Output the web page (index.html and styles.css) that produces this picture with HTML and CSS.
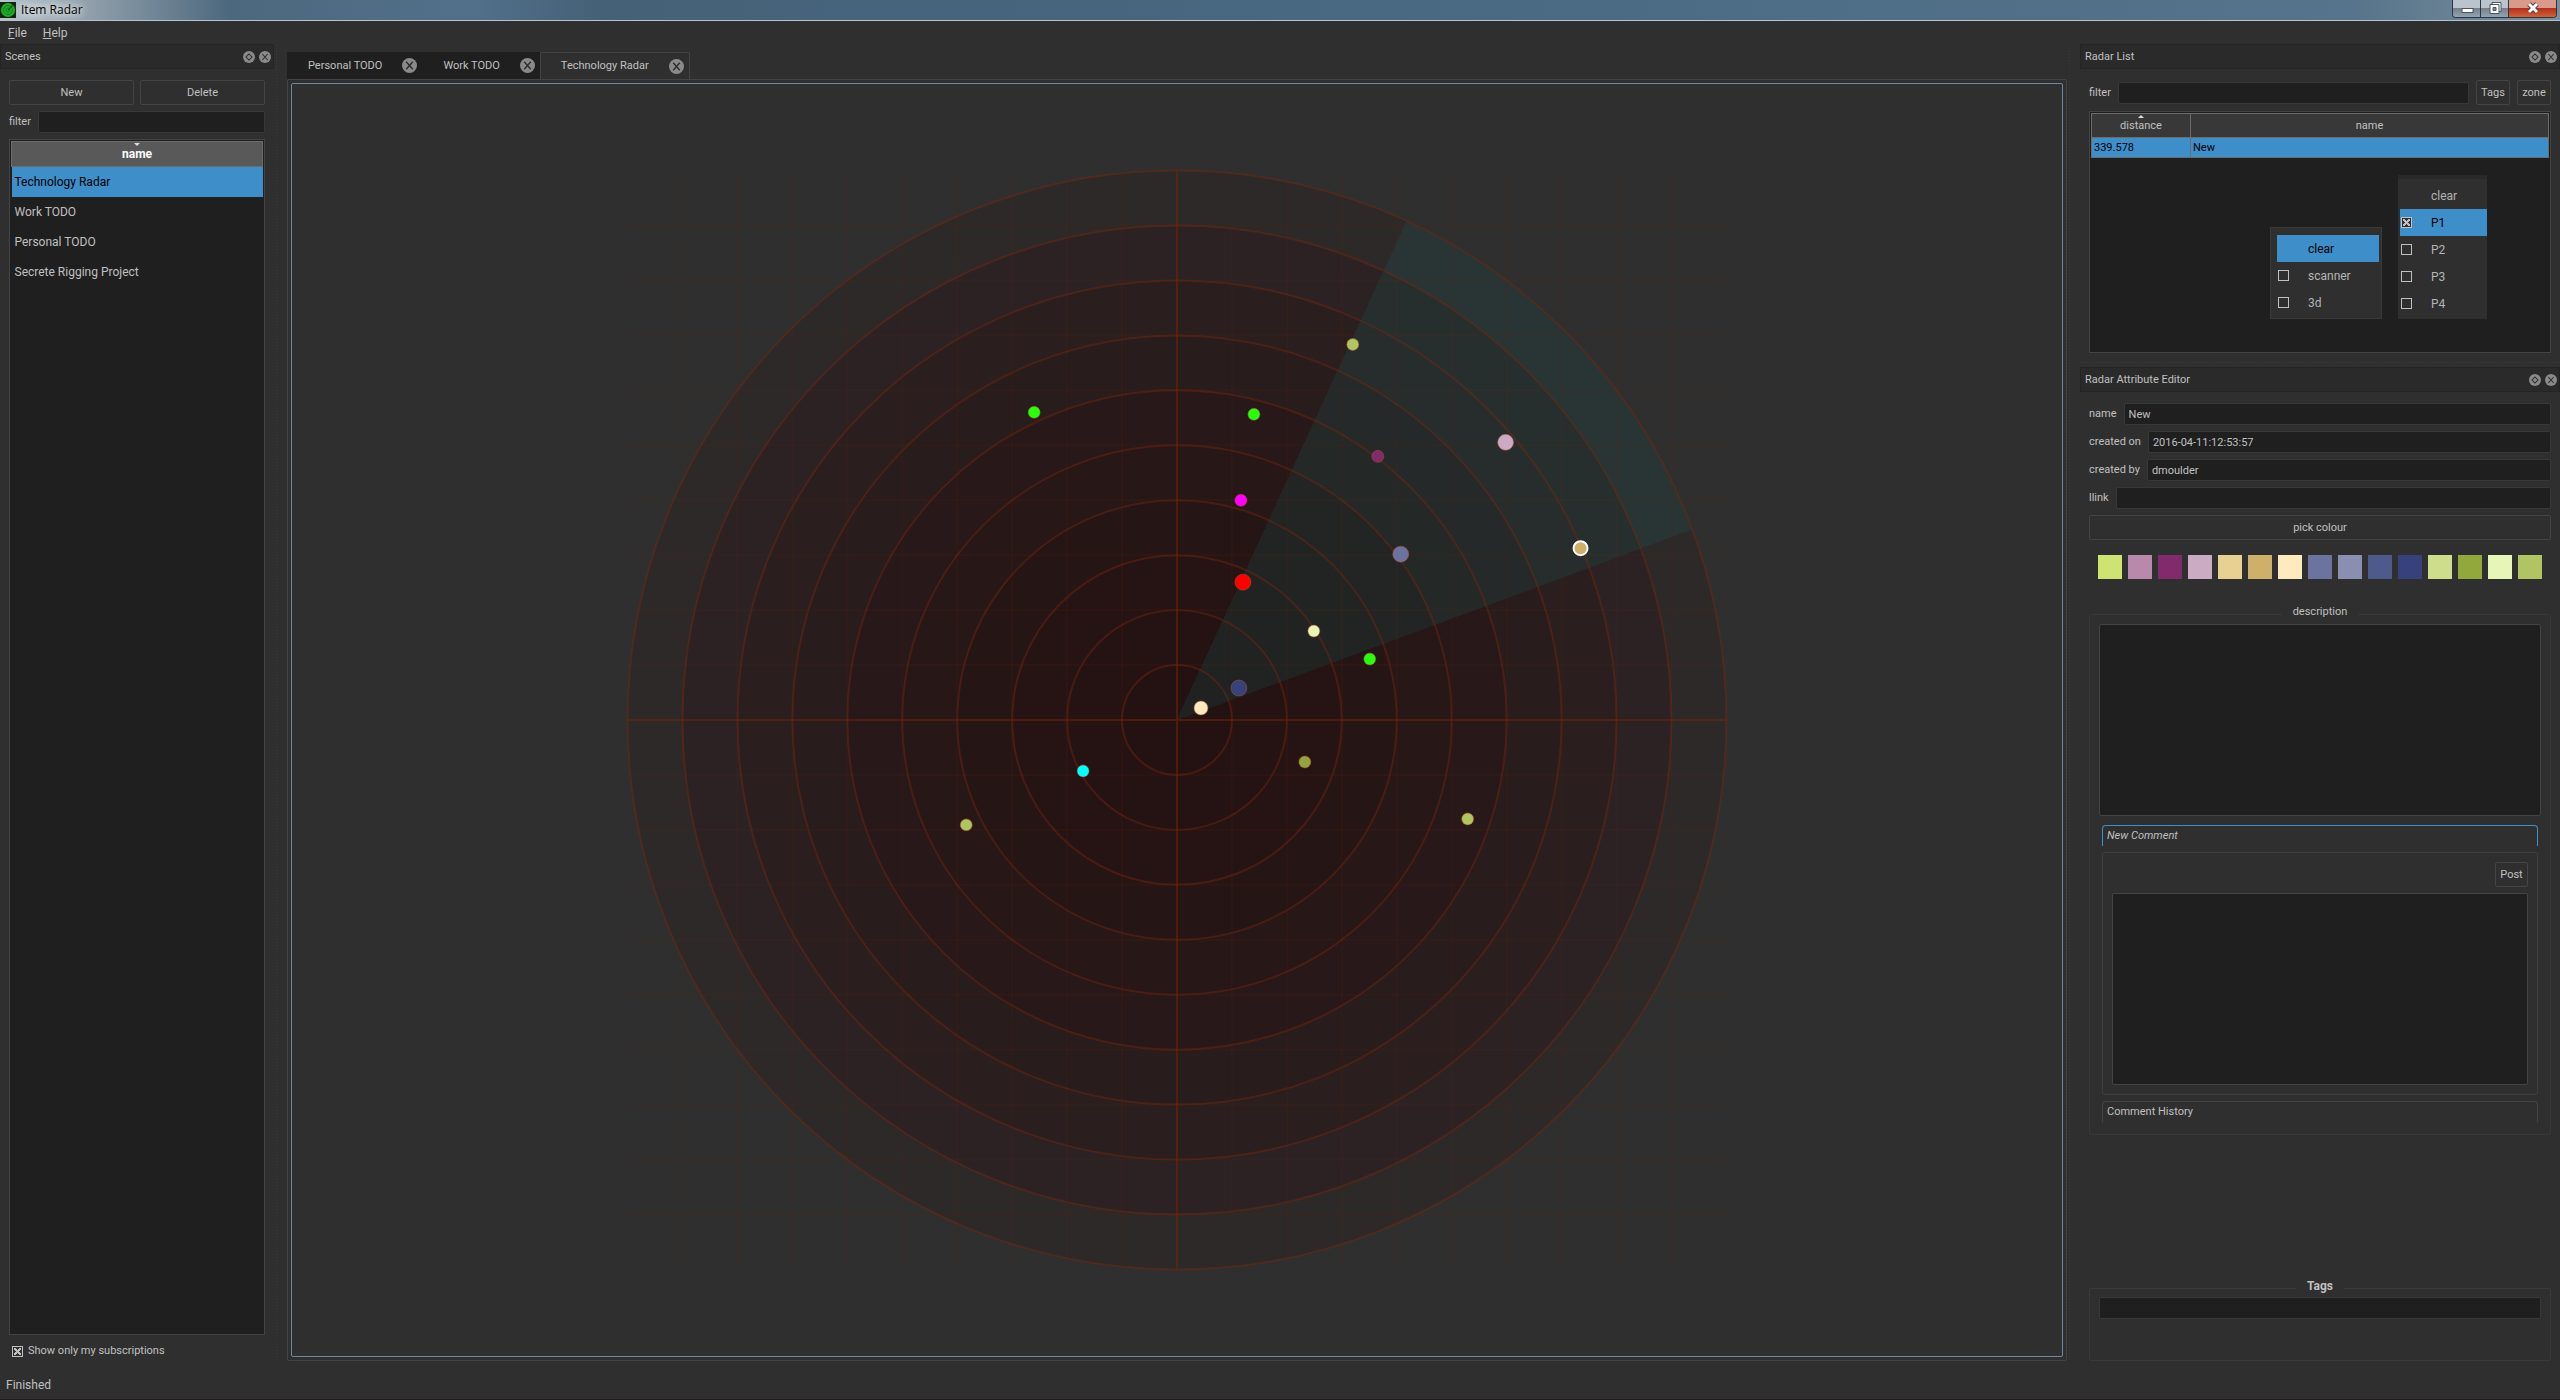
FILE: index.html
```html
<!DOCTYPE html>
<html lang="en">
<head>
<meta charset="utf-8">
<title>Item Radar</title>
<link rel="stylesheet" href="styles.css">
</head>
<body>
<header class="titlebar">
  <svg class="app-icon" viewBox="0 0 16 16" aria-hidden="true">
    <rect width="16" height="16" fill="#12240f"/>
    <circle cx="8" cy="8" r="7" fill="#1fae2c"/>
    <circle cx="8" cy="8" r="4.5" fill="none" stroke="#14801e"/>
    <circle cx="8" cy="8" r="2" fill="none" stroke="#14801e"/>
    <path d="M8 8L13 3" stroke="#0d5a15" stroke-width="1.2"/>
  </svg>
  <h1 class="app-title">Item Radar</h1>
  <div class="window-controls">
    <button class="win-btn" aria-label="Minimize"><svg viewBox="0 0 28 17"><rect x="9" y="8.500" width="11" height="4" fill="#fff" stroke="#4b5560"/></svg></button>
    <button class="win-btn" aria-label="Restore"><svg viewBox="0 0 28 17"><path d="M11 2.500h9v9h-9z" fill="#fff" stroke="#4b5560"/><path d="M9 4.500h9v9H9z" fill="#fff" stroke="#4b5560"/><path d="M12 7.500h3v3h-3z" fill="#7c8a97" stroke="#4b5560"/></svg></button>
    <button class="win-btn win-close" aria-label="Close"><svg viewBox="0 0 28 17"><path d="M10 4L18 12M18 4L10 12" stroke="#5c3a3a" stroke-width="5"/><path d="M10 4L18 12M18 4L10 12" stroke="#fff" stroke-width="3"/></svg></button>
  </div>
</header>

<svg class="defs" aria-hidden="true">
  <symbol id="i-close" viewBox="0 0 16 16"><circle cx="8" cy="8" r="8" fill="#8a8a8a"/><path d="M4.500 4L11.500 12M11.500 4L4.500 12" stroke="#2a2a2a" stroke-width="1.400"/></symbol>
  <symbol id="i-float" viewBox="0 0 16 16"><circle cx="8" cy="8" r="8" fill="#8a8a8a"/><path d="M8 4L12 8L8 12L4 8Z" fill="none" stroke="#2a2a2a" stroke-width="1.400"/></symbol>
</svg>

<nav class="menubar">
  <button class="menu-btn"><u>F</u>ile</button>
  <button class="menu-btn"><u>H</u>elp</button>
</nav>

<div class="workspace">
  <aside class="dock scenes">
    <header class="dock-title"><h2>Scenes</h2>
      <button class="icon-btn" aria-label="Float"><svg><use href="#i-float"/></svg></button>
      <button class="icon-btn" aria-label="Close"><svg><use href="#i-close"/></svg></button>
    </header>
    <div class="scenes-body">
      <div class="button-row">
        <button class="btn">New</button>
        <button class="btn">Delete</button>
      </div>
      <div class="field"><label for="scene-filter">filter</label><input id="scene-filter" type="text"></div>
      <div class="scene-list">
        <table class="scene-table">
          <thead><tr><th>name</th></tr></thead>
          <tbody>
            <tr class="selected"><td>Technology Radar</td></tr>
            <tr><td>Work TODO</td></tr>
            <tr><td>Personal TODO</td></tr>
            <tr><td>Secrete Rigging Project</td></tr>
          </tbody>
        </table>
      </div>
      <label class="check"><input type="checkbox" checked>Show only my subscriptions</label>
    </div>
  </aside>

  <div class="splitter"></div>

  <main class="center">
    <div class="tabs">
      <div class="tab"><button class="tab-label">Personal TODO</button><button class="icon-btn tab-x" aria-label="Close tab"><svg><use href="#i-close"/></svg></button></div>
      <div class="tab"><button class="tab-label">Work TODO</button><button class="icon-btn tab-x" aria-label="Close tab"><svg><use href="#i-close"/></svg></button></div>
      <div class="tab active"><button class="tab-label">Technology Radar</button><button class="icon-btn tab-x" aria-label="Close tab"><svg><use href="#i-close"/></svg></button></div>
    </div>
    <div class="pane">
      <svg class="radar" viewBox="-886 -636 1772 1272" role="img" aria-label="Radar"></svg>
    </div>
  </main>

  <div class="splitter"></div>

  <div class="right-column">
    <section class="dock radar-list">
      <header class="dock-title"><h2>Radar List</h2>
        <button class="icon-btn" aria-label="Float"><svg><use href="#i-float"/></svg></button>
        <button class="icon-btn" aria-label="Close"><svg><use href="#i-close"/></svg></button>
      </header>
      <div class="list-tools field"><label for="item-filter">filter</label><input id="item-filter" type="text"><button class="btn">Tags</button><button class="btn">zone</button></div>
      <div class="item-list">
        <table class="item-table">
          <thead><tr><th class="col-distance">distance</th><th>name</th></tr></thead>
          <tbody><tr><td>339.578</td><td>New</td></tr></tbody>
        </table>
        <div class="popup popup-tags">
          <button class="option current">clear</button>
          <label class="option"><input type="checkbox">scanner</label>
          <label class="option"><input type="checkbox">3d</label>
        </div>
        <div class="popup popup-zones">
          <button class="option">clear</button>
          <label class="option current"><input type="checkbox" checked>P1</label>
          <label class="option"><input type="checkbox">P2</label>
          <label class="option"><input type="checkbox">P3</label>
          <label class="option"><input type="checkbox">P4</label>
        </div>
      </div>
    </section>

    <div class="splitter-h"></div>

    <section class="dock editor">
      <header class="dock-title"><h2>Radar Attribute Editor</h2>
        <button class="icon-btn" aria-label="Float"><svg><use href="#i-float"/></svg></button>
        <button class="icon-btn" aria-label="Close"><svg><use href="#i-close"/></svg></button>
      </header>
      <div class="editor-body">
        <div class="field"><label for="f-name">name</label><input id="f-name" type="text" value="New"></div>
        <div class="field"><label for="f-on">created on</label><input id="f-on" type="text" value="2016-04-11:12:53:57"></div>
        <div class="field"><label for="f-by">created by</label><input id="f-by" type="text" value="dmoulder"></div>
        <div class="field"><label for="f-link">llink</label><input id="f-link" type="text"></div>
        <button class="btn">pick colour</button>
        <div class="swatches"></div>
        <fieldset class="group description">
          <legend>description</legend>
          <textarea class="text" aria-label="description"></textarea>
          <div class="comments">
            <button class="fold open">New Comment</button>
            <div class="comment-box">
              <button class="btn post">Post</button>
              <textarea class="text" aria-label="New Comment"></textarea>
            </div>
            <button class="fold">Comment History</button>
          </div>
        </fieldset>
        <fieldset class="group tags">
          <legend>Tags</legend>
          <input type="text" aria-label="Tags">
        </fieldset>
      </div>
    </section>
  </div>
</div>

<footer class="statusbar">Finished</footer>
<script src="radar.js"></script>
</body>
</html>
```
FILE: styles.css
```css
* { box-sizing: border-box; }

body {
  margin: 0;
  min-height: 100vh;
  display: flex;
  flex-direction: column;
  background: #2f2f2f;
  color: #c0c0c0;
  font: 11px/16px Roboto, "Noto Sans", sans-serif;
}

button, input, textarea { font: inherit; color: inherit; margin: 0; }
button { cursor: pointer; background: none; border: 0; padding: 0; }
h1, h2 { margin: 0; font: inherit; }
.defs { display: none; }

/* window frame */
.titlebar {
  flex: none;
  height: 21px;
  display: flex;
  align-items: center;
  gap: 5px;
  border-bottom: 1px solid #b4c2cf;
  background: linear-gradient(90deg, #b9c4cc 0, #8b9ba7 100px, #4c687e 230px, #52708a 470px, #446177 600px, #4a6a84 60%, #56748b 92%, #7d8f9d 100%);
}
.app-icon { width: 16px; height: 16px; }
.app-title {
  flex: 1;
  font-family: "Open Sans", sans-serif;
  font-size: 12px;
  color: #000;
  text-shadow: 0 0 8px #fff, 0 0 8px #fff;
}
.window-controls {
  align-self: flex-start;
  display: flex;
  height: 18px;
  margin-right: 3px;
  border: 1px solid #2c3640;
  border-top: 0;
  border-radius: 0 0 4px 4px;
  overflow: hidden;
}
.win-btn {
  width: 28px;
  border-right: 1px solid #2c3640;
  background: linear-gradient(#b9c4cc 50%, #74828e 50%, #94a3b0);
}
.win-btn svg { display: block; width: 28px; height: 17px; }
.win-close {
  width: 47px;
  border: 0;
  background: linear-gradient(#d99a8c 45%, #b3321c 50%, #d2603c);
}
.win-close svg { margin: 0 auto; }

.menubar { flex: none; height: 23px; display: flex; gap: 16px; padding-left: 8px; align-items: center; font-size: 12px; }

/* docks */
.workspace { flex: 1; display: flex; min-height: 0; }
.dock { display: flex; flex-direction: column; }
.scenes { flex: none; width: 274px; }
.dock-title {
  flex: none;
  height: 25px;
  display: flex;
  align-items: center;
  gap: 4px;
  padding: 0 2px 0 4px;
  background: #2a2a2a;
  border: 1px solid #242424;
}
.dock-title h2 { flex: 1; }
.icon-btn { flex: none; width: 12px; height: 12px; }
.icon-btn svg { display: block; width: 100%; height: 100%; }

.btn { height: 25px; border: 1px solid #444; border-radius: 2px; background: #2f2f2f; }

input[type="text"] {
  min-width: 0;
  height: 22px;
  padding: 0 4px;
  background: #1f1f1f;
  border: 1px solid #383838;
  border-radius: 2px;
}
.field { display: flex; align-items: center; gap: 7px; }
.field input { flex: 1; }

.scenes-body { flex: 1; display: flex; flex-direction: column; gap: 6px; padding: 11px 9px 0; }
.button-row { display: flex; gap: 6px; }
.button-row .btn { flex: 1; }
.scene-list { flex: 1; background: #1f1f1f; border: 1px solid #444; padding: 1px; }

table { width: 100%; border-collapse: collapse; }
th, td { padding: 0; }
.scene-table th {
  position: relative;
  height: 25px;
  background: #595959;
  border: 1px solid #6c6c6c;
  color: #fff;
  font-size: 12px;
}
.scene-table th::before, .col-distance::before {
  content: "";
  position: absolute;
  top: 1px;
  left: calc(50% - 3px);
  border: 3px solid transparent;
  border-top-color: #ddd;
  border-bottom: 0;
}
.scene-table td { height: 30px; padding-left: 3px; font-size: 12px; }
.scene-table .selected { background: #3d8ec9; color: #000; }

input[type="checkbox"] {
  appearance: none;
  flex: none;
  width: 11px;
  height: 11px;
  margin: 0;
  border: 1px solid #c0c0c0;
}
input[type="checkbox"]:checked {
  background:
    linear-gradient(45deg, transparent 36%, #c0c0c0 36% 64%, transparent 64%) center / 7px 7px no-repeat,
    linear-gradient(-45deg, transparent 36%, #c0c0c0 36% 64%, transparent 64%) center / 7px 7px no-repeat,
    #303030;
}
.check { display: flex; align-items: center; gap: 5px; padding-left: 3px; height: 20px; }

.splitter {
  flex: none;
  width: 13px;
  background: radial-gradient(circle, #3a3a3a 1px, transparent 1px) 1px 0 / 3px 3px repeat-y;
}

/* tabs and radar */
.center { flex: 1; min-width: 0; display: flex; flex-direction: column; padding-top: 8px; }
.tabs { display: flex; height: 27px; }
.tab { display: flex; align-items: center; gap: 20px; padding: 0 5px 0 21px; background: #1f1f1f; }
.tab.active { background: #2f2f2f; border: 1px solid #444; border-bottom: 0; border-radius: 2px 2px 0 0; padding-left: 20px; }
.tab-x { width: 15px; height: 15px; }
.pane { flex: 1; min-height: 0; display: flex; padding: 3px; border: 1px solid #444; border-radius: 2px; }
.radar { flex: 1; width: 100%; min-width: 0; height: 1274px; border: 1px solid #7087a0; border-radius: 2px; }

/* right column */
.right-column { flex: none; width: 480px; display: flex; flex-direction: column; }
.list-tools { padding: 11px 9px 6px; }
.list-tools .btn { width: 34px; }
.item-list {
  position: relative;
  height: 242px;
  margin: 0 9px;
  padding: 1px;
  background: #1f1f1f;
  border: 1px solid #444;
}
.item-table th {
  position: relative;
  height: 24px;
  background: #383838;
  border: 1px solid #6c6c6c;
  font-weight: normal;
}
.item-table .col-distance { width: 99px; }
.col-distance::before { border-top: 0; border-bottom: 3px solid #ddd; }
.item-table td {
  height: 20px;
  padding-left: 2px;
  background: #3d8ec9;
  border: 1px solid #6c6c6c;
  color: #000;
}

.popup { position: absolute; display: flex; flex-direction: column; background: #2f2f2f; color: #b4b4b4; }
.popup-tags { right: 168px; bottom: 33px; width: 112px; padding: 7px 2px 2px 6px; border: 1px solid #3a3a3a; }
.popup-zones { right: 63px; bottom: 33px; width: 89px; padding: 3px 0 2px 2px; border-top: 4px solid #292929; }
.option { display: flex; align-items: center; height: 27px; gap: 19px; padding-left: 1px; font-size: 12px; text-align: left; }
button.option { padding-left: 31px; }
.option.current { background: #3d8ec9; color: #000; }

.splitter-h { height: 14px; background: radial-gradient(circle, #3a3a3a 1px, transparent 1px) 0 8px / 3px 3px repeat-x; }

.editor { flex: 1; }
.editor-body { flex: 1; display: flex; flex-direction: column; gap: 6px; padding: 11px 9px 0; }
.swatches { display: flex; justify-content: space-between; padding: 9px 9px 0; }
.swatch { width: 24px; height: 24px; }

.group { margin: 0; min-width: 0; border: 1px solid #393939; border-radius: 2px; }
.group legend { margin: 0 auto; padding: 0 11px 4px; line-height: 14px; }
.text {
  display: block;
  width: 100%;
  height: 192px;
  resize: none;
  background: #1f1f1f;
  border: 1px solid #444;
  border-radius: 2px;
}
.description { margin-top: 20px; padding: 1px 9px 12px; }
.comments { display: flex; flex-direction: column; gap: 6px; padding: 9px 3px 0; }
.fold { height: 21px; padding-left: 4px; text-align: left; border: 1px solid #444; border-bottom: 0; border-radius: 4px 4px 0 0; }
.fold.open { border-color: #3d8ec9; font-style: italic; }
.comment-box { display: flex; flex-direction: column; gap: 6px; padding: 9px; border: 1px solid #3f3f3f; border-radius: 2px; }
.post { align-self: flex-end; width: 33px; }
.tags { margin-top: auto; height: 82px; padding: 0 9px; }
.tags legend { font-weight: bold; font-size: 12px; }
.tags input { width: 100%; }

.statusbar { flex: none; height: 39px; padding: 15px 6px 0; font-size: 12px; line-height: 18px; border-bottom: 1px solid #231a1c; }
```
FILE: radar.js
```js
const NS = "http://www.w3.org/2000/svg";
const radar = document.querySelector(".radar");
const STEP = 55;
const RINGS = 10;
const R = STEP * RINGS;

function add(tag, attrs) {
  const el = document.createElementNS(NS, tag);
  for (const key in attrs) el.setAttribute(key, attrs[key]);
  radar.appendChild(el);
}

function polar(radius, degrees) {
  const a = degrees * Math.PI / 180;
  return (radius * Math.cos(a)).toFixed(1) + " " + (-radius * Math.sin(a)).toFixed(1);
}

// ring fills, outermost first
const ringFills = ["#2d2928", "#2c2224", "#2a1f1e", "#291c1c", "#281819", "#271717", "#261515", "#261414", "#251213", "#241213"];
const sectorFills = ["#293434", "#272f2e", "#262d2c", "#25292a", "#242827", "#232525", "#222423", "#212323", "#212222", "#202222"];
ringFills.forEach((fill, i) => add("circle", { r: R - i * STEP, fill }));
sectorFills.forEach((fill, i) => {
  const r = R - i * STEP;
  add("path", { d: `M0 0L${polar(r, 20.3)}A${r} ${r} 0 0 0 ${polar(r, 65.3)}Z`, fill });
});

// square grid, range rings and axes
for (let i = -9; i <= 9; i++) {
  const p = i * STEP;
  add("path", { d: `M${p} ${-R}V${R}M${-R} ${p}H${R}`, stroke: "#7a2808", "stroke-opacity": 0.1, "stroke-width": 2 });
}
for (let i = 1; i <= RINGS; i++) {
  add("circle", { r: i * STEP, fill: "none", stroke: "#7a2810", "stroke-opacity": 0.42, "stroke-width": 2 });
}
add("path", { d: `M0 ${-R}V${R}M${-R} 0H${R}`, stroke: "#7a2408", "stroke-opacity": 0.45, "stroke-width": 2 });

const items = [
  [176, -376, 6, "#afc561"], [77, -306, 6, "#26ff0d"], [-143, -308, 6, "#26ff0d"],
  [201, -264, 6, "#812a6c"], [329, -278, 8, "#cbaac3"], [64, -220, 6, "#ff00fd"],
  [224, -166, 8, "#6c739e"], [404, -172, 7, "#cfb06b"], [66, -138, 8, "#ff0000"],
  [137, -89, 6, "#e7f5b7"], [193, -61, 6, "#26ff0d"], [62, -32, 8, "#37427c"],
  [24, -12, 7, "#ffe9bf"], [-94, 51, 6, "#00ffff"], [128, 42, 6, "#93a43c"],
  [-211, 105, 6, "#afc561"], [291, 99, 6, "#afc561"]
];
items.forEach(([cx, cy, r, fill]) => {
  const current = cx === 404;
  add("circle", { cx, cy, r, fill, stroke: current ? "#ffffff" : "#b45030", "stroke-opacity": current ? 1 : 0.5, "stroke-width": current ? 2 : 1 });
});

const palette = ["#cde472", "#b889ab", "#812a6c", "#cbaac3", "#e7d092", "#cfb06b", "#ffe9bf", "#6c739e", "#8a8eb0", "#4f5a8c", "#37427c", "#cddd8b", "#92a83c", "#e7f5b7", "#b0c463"];
const swatches = document.querySelector(".swatches");
palette.forEach(color => {
  const b = document.createElement("button");
  b.className = "swatch";
  b.style.background = color;
  b.setAttribute("aria-label", color);
  swatches.appendChild(b);
});
```
